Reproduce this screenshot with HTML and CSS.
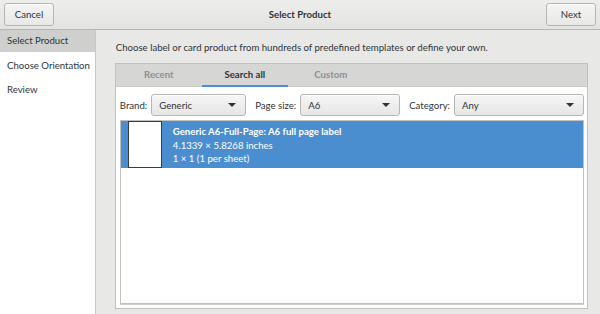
FILE: index.html
```html
<!DOCTYPE html>
<html>
<head>
<meta charset="utf-8">
<link rel="stylesheet" href="styles.css">
</head>
<body>
<div class="window">
  <header class="headerbar">
    <button class="btn">Cancel</button>
    <div class="title">Select Product</div>
    <button class="btn">Next</button>
  </header>
  <div class="main">
    <nav class="sidebar">
      <div class="side-item active">Select Product</div>
      <div class="side-item">Choose Orientation</div>
      <div class="side-item">Review</div>
    </nav>
    <section class="content">
      <p class="intro">Choose label or card product from hundreds of predefined templates or define your own.</p>
      <div class="notebook">
        <div class="tabs">
          <div class="tab">Recent</div>
          <div class="tab current">Search all</div>
          <div class="tab">Custom</div>
        </div>
        <div class="page">
          <div class="filters">
            <span class="lbl">Brand:</span>
            <div class="combo brand"><span>Generic</span><i class="arrow"></i></div>
            <span class="lbl">Page size:</span>
            <div class="combo size"><span>A6</span><i class="arrow"></i></div>
            <span class="lbl">Category:</span>
            <div class="combo cat"><span>Any</span><i class="arrow"></i></div>
          </div>
          <div class="list">
            <div class="row selected">
              <div class="thumb"></div>
              <div class="info">
                <div class="name">Generic A6-Full-Page: A6 full page label</div>
                <div>4.1339 × 5.8268 inches</div>
                <div>1 × 1 (1 per sheet)</div>
              </div>
            </div>
          </div>
        </div>
      </div>
    </section>
  </div>
</div>
</body>
</html>
```
FILE: styles.css
```css
* { box-sizing: border-box; }
html, body { margin: 0; padding: 0; }
body {
  width: 600px; height: 314px; overflow: hidden;
  font-family: Lato, "Noto Sans", sans-serif;
  font-size: 9.6px;
  color: #2e3436;
  background: #e8e8e7;
}
.window { display: flex; flex-direction: column; height: 314px; }
.headerbar {
  height: 30px;
  display: flex; align-items: center; justify-content: space-between;
  padding: 0 4px 1px 4px;
  background: linear-gradient(#ededec, #e3e3e2);
  border-bottom: 1px solid #b6b6b3;
}
.btn {
  font: inherit; color: #2e3436;
  width: 50px; height: 23px;
  border: 1px solid #b6b6b3; border-radius: 3px;
  background: linear-gradient(#f4f4f4, #e8e8e7);
  box-shadow: inset 0 1px #fff;
  padding: 0;
}
.title { font-weight: bold; }
.main { flex: 1; display: flex; min-height: 0; }
.sidebar {
  width: 97px; background: #fff;
  border-right: 1px solid #c8c8c6;
  display: flex; flex-direction: column;
}
.side-item { height: 24px; line-height: 24px; padding-left: 7px; white-space: nowrap; }
.side-item.active { background: #cfcfcd; height: 22px; line-height: 21px; margin-bottom: 2px; }
.content { flex: 1; padding: 0 12px 5px 19px; display: flex; flex-direction: column; }
.intro { margin: 11px 0 8px 1px; line-height: 14px; }
.notebook {
  flex: 1; border: 1px solid #c0c0bd;
  display: flex; flex-direction: column;
  background: #fff;
}
.tabs {
  height: 23px; background: #d6d6d4;
  display: flex; padding-left: 1px;
  border-bottom: 1px solid #c8c8c6;
}
.tab {
  width: 86px; text-align: center; line-height: 22px;
  font-weight: bold; color: #8d918f;
}
.tab:first-child { margin-left: -1px; }
.tab.current { color: #2e3436; border-bottom: 2px solid #4a90d9; height: 23px; margin-bottom: -1px; }
.page { flex: 1; padding: 7px 3px 4px 4px; display: flex; flex-direction: column; }
.filters { display: flex; align-items: center; height: 22px; margin-bottom: 4px; }
.lbl { margin-right: 4px; white-space: nowrap; }
.combo {
  height: 22px; display: flex; align-items: center; justify-content: space-between;
  padding: 0 9px 0 7px;
  border: 1px solid #b6b6b3; border-radius: 3px;
  background: linear-gradient(#f6f6f6, #e6e6e5);
  box-shadow: inset 0 1px #fff;
  margin-right: 9px;
  flex: none;
}
.combo.brand { width: 95px; }
.combo.size { width: 100px; }
.combo.cat { width: 130px; margin-right: 0; }
.arrow {
  width: 0; height: 0;
  border-left: 4px solid transparent; border-right: 4px solid transparent;
  border-top: 4px solid #2e3436;
}
.list {
  flex: 1; border: 1px solid #c0c0bd; background: #fff;
  box-shadow: 0 1px 0 #cfcfcd;
}
.row { display: flex; height: 47px; }
.row.selected { background: #4a8ed0; color: #fff; }
.thumb {
  width: 34px; height: 47px; margin-left: 7px;
  background: #fff; border: 1px solid #3b3b3b;
}
.info { padding: 4px 0 0 11px; line-height: 13.5px; }
.name { font-weight: bold; }
```
